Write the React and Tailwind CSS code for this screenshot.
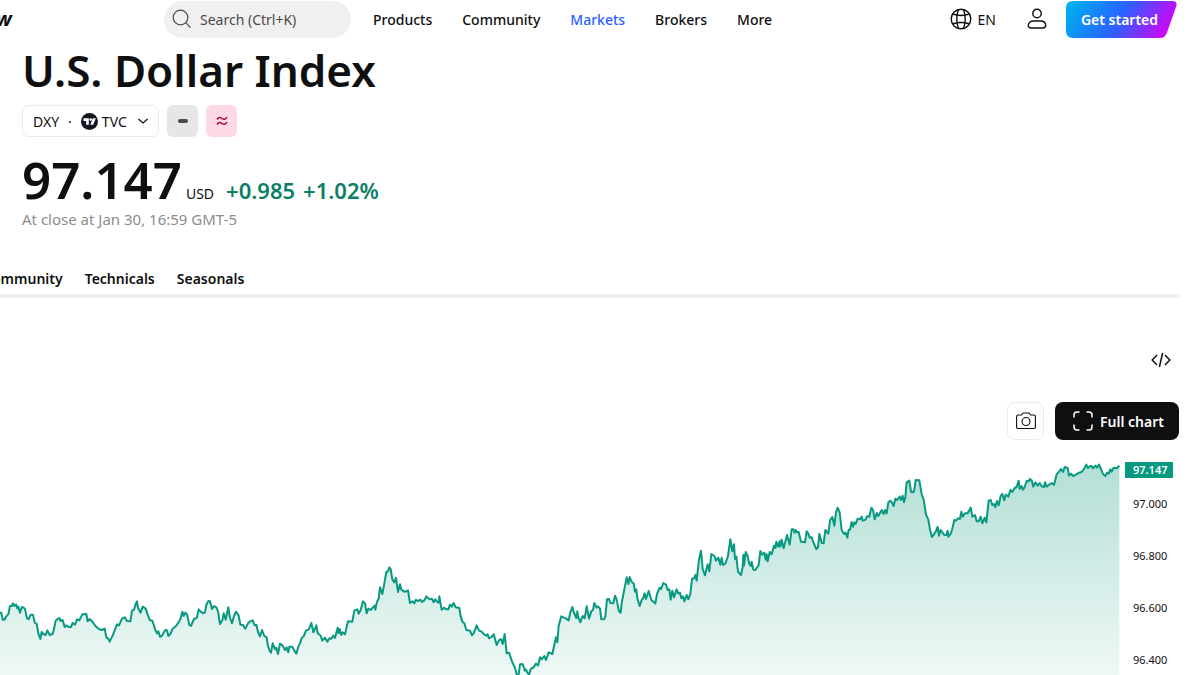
import React from 'react';

const SEGMENTS = [
  {
    x: 0, y: 300,
    points: [[0,188],[4,188],[8,209],[13,209],[18,200],[25,193],[30,168],[35,168],[39,160],[43,168],[48,163],[52,175],[55,170],[60,188],[65,172],[70,172],[75,177],[81,205],[86,207],[92,194],[99,194],[104,218],[110,222],[115,250],[121,267],[125,246],[130,252],[137,255],[142,241],[149,255],[158,252],[163,232],[167,212],[173,207],[178,204],[182,213],[188,210],[194,231],[199,226],[206,231],[213,231],[218,219],[225,224],[231,208],[238,211],[247,193],[259,192],[263,214],[269,207],[278,216],[287,229],[297,237],[306,240],[314,236],[319,262],[325,266],[329,275],[338,257],[346,236],[351,223],[357,226],[366,206],[374,202],[381,213],[391,214],[396,182],[402,179],[406,165],[411,154],[414,174],[422,188],[428,170],[437,176],[444,197],[450,211],[457,212],[466,240],[471,250],[475,244],[480,260],[485,259],[490,250],[496,240],[501,241],[505,258],[511,252],[518,236],[528,228],[535,218],[541,208],[547,185],[551,198],[556,188],[561,193],[568,225],[573,228],[582,207],[591,203],[596,178],[602,185],[610,190],[615,187],[619,165],[625,153],[630,154],[636,177],[642,168],[649,172],[654,184],[660,222],[667,211],[671,190],[677,209],[685,172],[690,204],[696,220],[702,198],[708,185],[716,197],[721,224],[729,225],[736,236],[744,220],[751,214],[758,211],[764,226],[769,224],[774,246],[780,259],[786,240],[793,258],[800,262],[803,284],[809,303],[813,308],[818,280],[825,298],[829,293],[834,312],[840,281],[848,287],[855,300],[860,292],[865,307],[868,290],[877,290],[883,302],[889,311],[895,290]],
  },
  {
    x: 900, y: 300,
    points: [[0,280],[5,264],[11,259],[18,242],[26,239],[34,219],[40,247],[49,226],[53,250],[62,257],[67,272],[75,263],[82,275],[88,265],[94,266],[100,257],[105,264],[113,233],[116,250],[119,237],[124,255],[128,247],[135,253],[144,214],[157,215],[163,182],[172,178],[176,191],[182,180],[189,154],[195,160],[200,190],[205,176],[212,180],[224,167],[226,179],[231,155],[236,146],[240,112],[247,132],[253,100],[259,66],[264,64],[268,52],[272,57],[277,88],[283,97],[288,83],[294,126],[300,103],[304,119],[313,125],[320,124],[324,121],[330,159],[338,154],[343,160],[347,150],[354,153],[362,149],[366,156],[373,151],[379,139],[384,144],[391,148],[396,146],[401,157],[406,148],[412,156],[416,158],[418,139],[425,179],[432,173],[439,178],[445,178],[450,164],[455,170],[461,159],[467,172],[478,174],[482,199],[487,215],[493,220],[499,240],[510,242],[516,256],[522,248],[530,226],[537,242],[545,245],[551,252],[558,257],[563,253],[567,265],[574,261],[581,253],[590,285],[597,271],[603,267],[608,282],[614,252],[620,310],[627,308],[636,334],[645,354],[651,376],[656,373],[660,343],[667,342],[672,352],[674,362],[678,359],[682,368],[687,374],[693,356],[700,353],[708,341],[714,347],[720,322],[725,328],[733,318],[738,330],[746,307],[757,312],[764,280],[768,262],[772,277],[776,228],[784,199],[797,205],[806,211],[811,187],[817,171],[822,189],[829,204],[832,184],[834,199],[841,217],[848,198],[854,205],[860,169],[867,206],[874,184],[879,180],[883,159],[890,173]],
  },
  {
    x: 1620, y: 210,
    points: [[174,259],[180,266],[184,298],[192,298],[196,290],[201,238],[207,237],[211,249],[220,250],[225,227],[229,235],[237,274],[242,278],[245,250],[252,213],[260,172],[265,192],[269,171],[275,186],[281,190],[285,215],[289,208],[292,235],[299,258],[305,240],[309,236],[314,220],[318,237],[326,213],[334,240],[342,247],[346,251],[351,222],[359,203],[363,207],[370,189],[378,194],[383,210],[388,208],[392,239],[397,212],[402,232],[410,208],[415,221],[420,218],[424,235],[429,229],[433,244],[440,225],[445,238],[451,222],[456,177],[463,174],[466,165],[470,182],[477,119],[483,92],[488,147],[495,166],[503,133],[508,154],[514,102],[523,108],[528,122],[535,113],[541,134],[545,113],[549,135],[556,131],[564,108],[571,58],[577,94],[582,73],[585,117],[589,110],[594,155],[603,165],[608,142],[610,104],[612,137],[617,96],[622,105],[628,132],[633,138],[635,125],[640,149],[646,150],[656,135],[661,93],[667,104],[673,98],[677,119],[680,103],[683,124],[689,96],[695,103],[702,77],[706,84],[709,65],[714,80],[719,64],[721,80],[725,59],[731,85],[741,45],[749,74]],
  },
  {
    x: 2340, y: 0,
    points: [[35,238],[40,238],[44,248],[47,240],[51,247],[56,246],[63,275],[75,277],[80,244],[85,251],[89,263],[95,262],[101,279],[109,297],[114,292],[118,251],[125,279],[131,280],[136,240],[145,251],[150,211],[157,201],[163,227],[168,187],[173,173],[179,187],[185,240],[192,252],[197,248],[202,263],[206,239],[210,239],[215,216],[219,230],[223,217],[227,222],[233,206],[240,208],[245,200],[248,212],[257,209],[261,199],[268,200],[274,173],[279,180],[284,208],[290,189],[295,198],[305,180],[311,192],[315,180],[320,190],[325,157],[331,152],[336,158],[341,168],[346,146],[352,150],[359,140],[363,150],[368,137],[372,157],[376,142],[380,97],[388,92],[393,125],[400,127],[403,119],[407,90],[418,91],[425,133],[431,149],[438,194],[445,209],[450,239],[456,261],[462,253],[468,243],[473,231],[477,257],[482,240],[492,254],[499,255],[503,242],[505,260],[511,253],[516,240],[523,210],[528,212],[534,205],[540,207],[544,185],[548,200],[555,190],[563,190],[572,173],[577,200],[585,195],[590,214],[596,214],[602,200],[607,220],[614,203],[619,217],[626,152],[632,150],[637,165],[642,162],[646,172],[651,153],[656,166],[662,138],[667,132],[673,151],[677,134],[685,140],[691,120],[697,126],[704,114],[710,111],[716,92],[719,117],[725,108],[729,119],[733,114],[740,93],[747,94],[749,87],[755,91],[760,110],[766,97],[773,107],[779,99],[785,109],[792,111],[795,97],[800,110],[809,103],[815,99],[822,105],[830,73],[837,65],[843,57],[849,66],[854,51],[863,54],[867,77],[873,71],[879,78],[888,74],[897,68]],
  },
  {
    x: 2880, y: -360,
    points: [[365,426],[373,415],[379,404],[384,414],[389,409],[395,408],[399,415],[406,407],[411,413],[417,404],[423,417],[429,432],[436,438],[441,428],[446,431],[451,418],[455,425],[461,413],[470,415],[474,411],[478,407]],
  },
];

const LINE = 'M' + SEGMENTS.flatMap((s) => s.points.map(([px, py]) => `${s.x + px} ${s.y + py}`)).join('L');
const AREA = `${LINE}V700H0Z`;

const NAV = ['Products', 'Community', 'Markets', 'Brokers', 'More'];
const TICKS = ['97.000', '96.800', '96.600', '96.400'];

function Header() {
  return (
    <header className="flex h-[38px] items-center pr-[23px] text-[14px] font-medium">
      <a href="#home" className="w-[164px] text-[20px] leading-6 font-bold" aria-label="Home">
        <span className="-ml-1 italic">w</span>
      </a>
      <button className="flex h-[37px] w-[187px] items-center gap-2 rounded-full bg-[#f0f0f0] pl-2 font-normal text-[#4a4a4a]">
        <svg className="size-5" viewBox="0 0 20 20" fill="none" stroke="currentColor" strokeWidth="1.2" aria-hidden="true">
          <circle cx="8.5" cy="8.5" r="7.3" />
          <path d="M13.7 13.7 18.6 18.6" />
        </svg>
        Search (Ctrl+K)
      </button>
      <nav className="ml-[22px] flex gap-[30px]">
        {NAV.map((n) => (
          <a key={n} href={`#${n.toLowerCase()}`} className={n === 'Markets' ? 'text-[#2962ff]' : ''}>{n}</a>
        ))}
      </nav>
      <div className="ml-auto flex items-center">
        <button className="flex items-center gap-[6px] font-normal">
          <svg className="size-[22px]" viewBox="0 0 22 22" fill="none" stroke="currentColor" strokeWidth="1.4" aria-hidden="true">
            <circle cx="11" cy="11" r="9.8" />
            <path d="M8.500 1.500C6.200 7 6.200 15 8.500 20.500M13.500 1.500C15.800 7 15.800 15 13.500 20.500M2.500 6C7.500 7.700 14.500 7.700 19.500 6M2.500 16C7.500 14.300 14.500 14.300 19.500 16" />
          </svg>
          EN
        </button>
        <button aria-label="Open user menu" className="ml-[30px]">
          <svg className="size-[22px]" viewBox="0 0 22 22" fill="none" stroke="currentColor" strokeWidth="1.4" aria-hidden="true">
            <circle cx="11" cy="5.500" r="4.200" />
            <path d="M5.500 20C3.400 20 2.300 19.200 2.300 17.600C2.300 14.800 4.500 13 7.500 13H14.500C17.500 13 19.700 14.800 19.700 17.600C19.700 19.200 18.600 20 16.500 20Z" />
          </svg>
        </button>
        <button className="relative ml-[18px] h-[37px] w-[111px] pr-1 font-semibold text-white">
          <svg className="absolute inset-0 size-full" viewBox="0 0 111 37" preserveAspectRatio="none" aria-hidden="true">
            <defs>
              <linearGradient id="cta" x1="0" y1="0.300" x2="1" y2="0.500">
                <stop offset="0" stopColor="#00aeef" />
                <stop offset="0.500" stopColor="#2962ff" />
                <stop offset="1" stopColor="#d500f9" />
              </linearGradient>
            </defs>
            <path d="M7 0H106Q112 0 110.200 5.500L101 31.500Q99 37 94 37H7Q0 37 0 30V7Q0 0 7 0Z" fill="url(#cta)" />
          </svg>
          <span className="relative">Get started</span>
        </button>
      </div>
    </header>
  );
}

function Quote() {
  return (
    <section className="px-[22px]">
      <h1 className="mt-1 text-[44px] leading-[56px] font-semibold">U.S. Dollar Index</h1>
      <div className="mt-[7px] flex gap-2">
        <button className="flex h-8 w-[137px] items-center rounded-md border border-[#ebebeb] px-[10px] text-[14px]">
          DXY
          <span className="mx-[9px]">·</span>
          <svg className="mr-1 size-[17px]" viewBox="0 0 17 17" aria-hidden="true">
            <circle cx="8.500" cy="8.500" r="8.500" fill="#131722" />
            <path d="M2.500 5.300H7.800V11.700H5.200V8H2.500ZM11.800 5.300H14.800L12.200 11.700H9.300Z" fill="#fff" />
            <circle cx="9.700" cy="6.600" r="1.300" fill="#fff" />
          </svg>
          TVC
          <svg className="ml-auto size-[10px]" viewBox="0 0 10 10" fill="none" stroke="currentColor" strokeWidth="1.300" aria-hidden="true">
            <path d="M0.500 3 5 7 9.500 3" />
          </svg>
        </button>
        <button aria-label="Market closed" className="grid h-8 w-[31px] place-items-center rounded-md bg-[#e6e6e6]">
          <span className="h-1 w-[10px] rounded-full bg-[#4a4a4a]" />
        </button>
        <button aria-label="Delayed data" className="grid h-8 w-[31px] place-items-center rounded-md bg-[#fdd9e6]">
          <svg className="h-[10px] w-3" viewBox="0 0 12 10" fill="none" stroke="#a8004c" strokeWidth="1.500" aria-hidden="true">
            <path d="M1 3.500C2.500 1 4 1 6 2.500S9.500 3.500 11 1.200M1 8.500C2.500 6 4 6 6 7.500S9.500 8.500 11 6.200" />
          </svg>
        </button>
      </div>
      <div className="mt-[14px] flex h-14 items-baseline">
        <span className="text-[51px] leading-[56px] font-semibold">97.147</span>
        <span className="ml-1 text-[14px] leading-5">USD</span>
        <span className="ml-3 flex gap-2 text-[22px] leading-6 font-semibold text-[#0a7f66]">
          <span>+0.985</span>
          <span>+1.02%</span>
        </span>
      </div>
      <p className="mt-[2px] text-[15px] leading-5 text-[#8c8c8c]">At close at Jan 30, 16:59 GMT-5</p>
    </section>
  );
}

function Chart() {
  return (
    <section className="flex">
      <svg className="h-[225px] min-w-0 flex-1" viewBox="0 0 3360 675" preserveAspectRatio="none" role="img" aria-label="Price chart">
        <defs>
          <linearGradient id="area" gradientUnits="userSpaceOnUse" x1="0" y1="40" x2="0" y2="675">
            <stop offset="0" stopColor="#b3dfd6" />
            <stop offset="1" stopColor="#eff8f6" />
          </linearGradient>
        </defs>
        <path d={AREA} fill="url(#area)" />
        <path d={LINE} fill="none" stroke="#089981" strokeWidth="2" strokeLinejoin="round" vectorEffect="non-scaling-stroke" />
      </svg>
      <div className="flex w-20 flex-col pt-3 pl-[5px] text-[11px]">
        <span className="h-4 w-12 bg-[#089981] pl-2 leading-4 font-semibold text-white">97.147</span>
        <ul className="mt-[18px] flex flex-col gap-9 pl-2 leading-4 text-[#0f0f0f]">
          {TICKS.map((t) => <li key={t}>{t}</li>)}
        </ul>
      </div>
    </section>
  );
}

export default function App() {
  return (
    <div className="overflow-hidden bg-white font-['Noto_Sans',sans-serif] text-[#0f0f0f]">
      <Header />
      <main>
        <Quote />
        <nav className="mt-[38px] mr-5 -ml-[17px] flex gap-[22px] border-b-4 border-[#f0f0f0] pb-[3px] text-[14px] leading-6 font-semibold">
          <a href="#community">Community</a>
          <a href="#technicals">Technicals</a>
          <a href="#seasonals">Seasonals</a>
        </nav>
        <div className="mt-[52px] flex justify-end pr-[29px]">
          <button aria-label="Get widget">
            <svg className="h-5 w-[20px]" viewBox="0 0 20 20" fill="none" stroke="currentColor" strokeWidth="1.500" aria-hidden="true">
              <path d="M6 5 1.200 10 6 15M14 5 18.800 10 14 15M11.600 3 8.400 17" />
            </svg>
          </button>
        </div>
        <div className="mt-8 mb-[10px] flex justify-end gap-[11px] pr-[21px]">
          <button aria-label="Take a snapshot" className="grid h-[38px] w-[37px] place-items-center rounded-lg border border-[#ebebeb]">
            <svg className="h-[18px] w-5" viewBox="0 0 20 18" fill="none" stroke="currentColor" strokeWidth="1.100" aria-hidden="true">
              <path d="M2 3H5.500L7 1H13L14.500 3H18Q19.400 3 19.400 4.500V15Q19.400 16.500 18 16.500H2Q0.600 16.500 0.600 15V4.500Q0.600 3 2 3Z" />
              <circle cx="10" cy="9.500" r="4" />
            </svg>
          </button>
          <button className="flex h-[38px] w-[124px] items-center justify-end gap-[7px] rounded-lg bg-[#0f0f0f] pr-[15px] text-[14px] font-semibold text-white">
            <svg className="size-5" viewBox="0 0 20 20" fill="none" stroke="currentColor" strokeWidth="1.500" aria-hidden="true">
              <path d="M1 6.500V4Q1 1 4 1H6.500M13.500 1H16Q19 1 19 4V6.500M19 13.500V16Q19 19 16 19H13.500M6.500 19H4Q1 19 1 16V13.500" />
            </svg>
            Full chart
          </button>
        </div>
        <Chart />
      </main>
    </div>
  );
}
